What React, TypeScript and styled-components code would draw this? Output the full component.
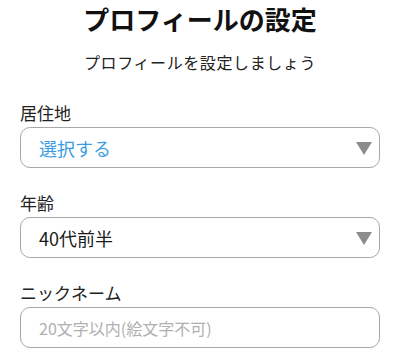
import React from "react";
import styled, { createGlobalStyle } from "styled-components";

const Global = createGlobalStyle`
  html, body { margin: 0; padding: 0; background: #fff; }
  body { font-family: "Noto Sans CJK JP", "Noto Sans", sans-serif; color: #1a1a1a; }
  * { box-sizing: border-box; }
`;

const Page = styled.div`
  width: 400px;
  padding: 0 20px;
  display: flex;
  flex-direction: column;
`;

const Title = styled.h1`
  margin: 0;
  font-size: 26px;
  font-weight: 700;
  line-height: 38px;
  text-align: center;
  color: #111;
`;

const Subtitle = styled.p`
  margin: 12px 0 0;
  font-size: 16px;
  letter-spacing: 0.6px;
  line-height: 24px;
  text-align: center;
  color: #222;
`;

const Field = styled.div<{ $first?: boolean }>`
  display: flex;
  flex-direction: column;
  gap: 2px;
  margin-top: ${(p) => (p.$first ? "27px" : "23px")};
`;

const Label = styled.label`
  font-size: 17px;
  line-height: 24px;
  color: #222;
`;

const Box = styled.div`
  height: 41px;
  border: 1px solid #a8a8a8;
  border-radius: 10px;
  display: flex;
  align-items: center;
  justify-content: space-between;
  padding: 0 7px 0 18px;
`;

const Value = styled.span<{ $placeholder?: boolean }>`
  font-size: 18px;
  color: ${(p) => (p.$placeholder ? "#3a9de4" : "#1a1a1a")};
`;

const Arrow = styled.span`
  width: 0;
  height: 0;
  border-left: 8px solid transparent;
  border-right: 8px solid transparent;
  border-top: 13px solid #8c8c8c;
  margin-top: 1px;
`;

const Input = styled.input`
  height: 41px;
  border: 1px solid #a8a8a8;
  border-radius: 10px;
  padding: 0 18px;
  font-family: inherit;
  font-size: 16px;
  outline: none;
  &::placeholder { color: #b0b0b0; }
`;

export default function App() {
  return (
    <>
      <Global />
      <Page>
        <Title>プロフィールの設定</Title>
        <Subtitle>プロフィールを設定しましょう</Subtitle>
        <Field $first>
          <Label>居住地</Label>
          <Box>
            <Value $placeholder>選択する</Value>
            <Arrow />
          </Box>
        </Field>
        <Field>
          <Label>年齢</Label>
          <Box>
            <Value>40代前半</Value>
            <Arrow />
          </Box>
        </Field>
        <Field>
          <Label>ニックネーム</Label>
          <Input placeholder="20文字以内(絵文字不可)" />
        </Field>
      </Page>
    </>
  );
}
